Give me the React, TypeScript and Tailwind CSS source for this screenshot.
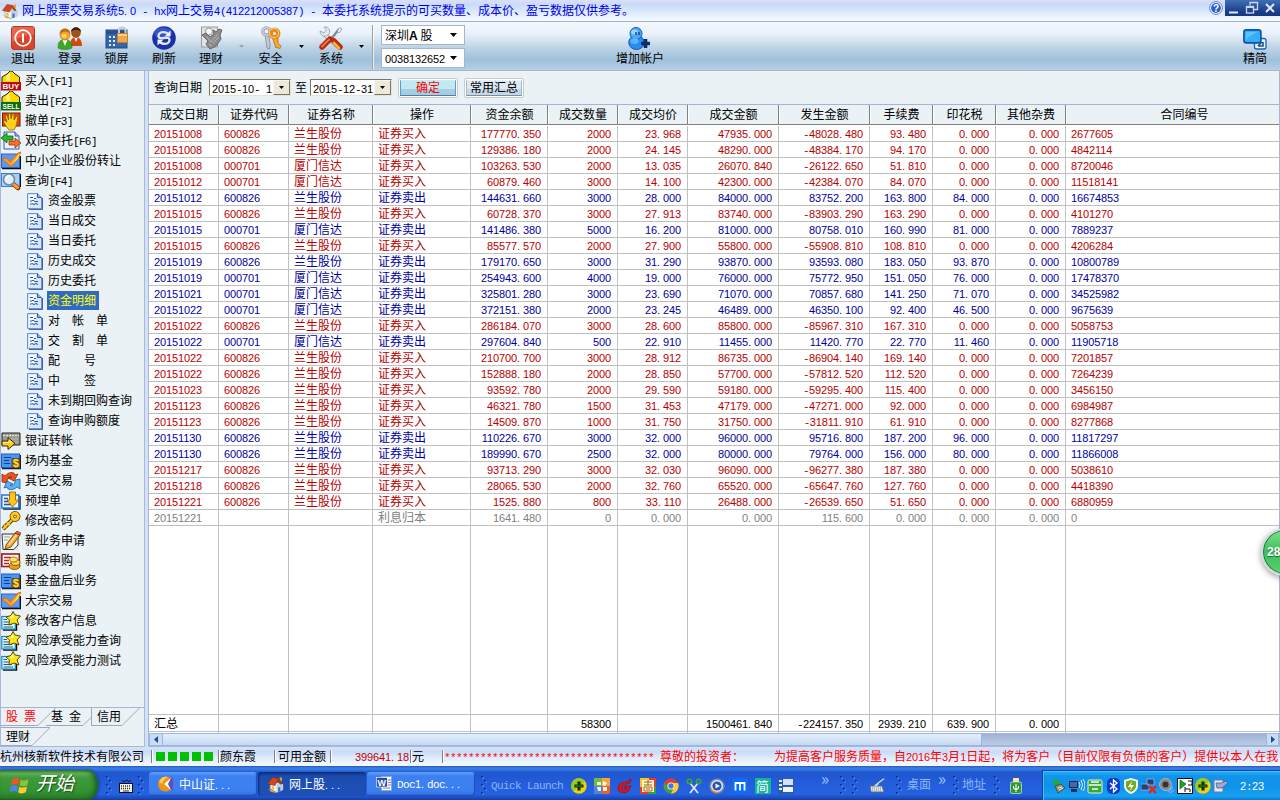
import React from "react";

type Kids = { children?: React.ReactNode };

/** Half-width characters on a 6px pitch: digits, points and the rest each have their own tracking. */
function Half({ t }: { t: string }) {
  return (
    <>
      {t.split(/(\d+|\.+)/).map((p, i) => {
        if (!p) return null;
        if (/^\d/.test(p))
          return <span key={i} className="font-['Liberation_Sans',sans-serif] text-[11px] tracking-[-0.12px]">{p}</span>;
        if (p[0] === ".")
          return <span key={i} className="font-['Liberation_Sans',sans-serif] text-[11px] tracking-[2.94px]">{p}</span>;
        return <span key={i} className="font-['Liberation_Mono',monospace] text-[11px] tracking-[-0.6px]">{p}</span>;
      })}
    </>
  );
}

/** Mixed text: ideographs at 12px, half-width characters on a 6px pitch. */
function T({ t }: { t: string }) {
  return <>{t.split(/([\x20-\x7e]+)/).map((p, i) => (i % 2 ? <Half key={i} t={p} /> : p))}</>;
}

function Svg({ w, h, vb, children, cls = "" }: Kids & { w: number; h: number; vb?: string; cls?: string }) {
  return (
    <svg width={w} height={h} viewBox={vb ?? `0 0 ${w} ${h}`} className={`block shrink-0 ${cls}`}>
      {children}
    </svg>
  );
}

/* ---------- shared small drawings ---------- */

const House = ({ s = 16 }: { s?: number }) => (
  <Svg w={s} h={s} vb="0 0 16 16">
    <path d="M3 8 L9 6 L15 8 V13 L9 15.5 L3 12Z" fill="#f4f4f4" stroke="#a98" strokeWidth=".6" />
    <path d="M9 7 L15 8 V13 L9 15.5Z" fill="#b9d0ee" />
    <path d="M0.5 7.5 L5 1.5 L11 2.5 L7.5 9Z" fill="#d2461e" stroke="#8a2a10" strokeWidth=".5" />
    <path d="M11 2.5 L14.5 7.5 L12.5 8 L10 5Z" fill="#a83416" />
    <path d="M12 1.5h2v4l-2-2z" fill="#f0a020" />
    <path d="M1 12 L5 13.5 L9 16 L4 15Z" fill="#f5a11c" />
    <path d="M10.5 10.5h2v4l-2 .8z" fill="#3a6db5" />
    <path d="M4.5 9.5l2 .6v3l-2-.8z" fill="#f4b63a" />
  </Svg>
);

const Arrow = ({ c = "#000" }: { c?: string }) => (
  <Svg w={5} h={3}>
    <path d="M0 0H5L2.5 3Z" fill={c} />
  </Svg>
);

/* ---------- title bar ---------- */

function TitleBar() {
  return (
    <div className="flex h-[22px] shrink-0 items-start border-b border-[#a9b5cf] bg-[linear-gradient(#dadefa_0,#c9dbf8_5px,#d6e6fb_10px,#f3f9ff_20px)] pl-[2px]">
      <div className="pt-[3px]">
        <House />
      </div>
      <div className="flex-1 whitespace-pre pl-[4px] text-[12px] leading-[20px] text-[#0000e8]">
        <T t="网上股票交易系统5.0 - hx网上交易4(412212005387) - 本委托系统提示的可买数量、成本价、盈亏数据仅供参考。" />
      </div>
      <Svg w={14} h={14} cls="mt-[1px] mr-[2px]">
        <circle cx="7" cy="7" r="6.4" fill="#f4f8ff" stroke="#5a86c8" />
        <circle cx="7" cy="7" r="4.9" fill="#2a5fd0" />
        <text x="7" y="10.6" textAnchor="middle" className="fill-white font-['Liberation_Sans',sans-serif] text-[10px] font-bold">?</text>
      </Svg>
      <div className="flex h-[16px] w-[55px] bg-[linear-gradient(#3d70b4,#1c3f8c_70%,#153782)]">
        <Svg w={55} h={16}>
          <path d="M4 12.5H13" stroke="#dce8fa" strokeWidth="2" />
          <path d="M25 5.5V2.5H32.5V9.5H29" stroke="#c9d8f0" strokeWidth="1.3" fill="none" />
          <rect x="21.5" y="6.5" width="7" height="6.5" stroke="#c9d8f0" strokeWidth="1.3" fill="none" />
          <path d="M21 7H29" stroke="#c9d8f0" strokeWidth="2" />
          <path d="M41 4L49 12M49 4L41 12" stroke="#dfe6f2" strokeWidth="2" />
        </Svg>
      </div>
    </div>
  );
}

/* ---------- toolbar ---------- */

const ExitIcon = () => (
  <Svg w={24} h={24}>
    <rect x=".5" y=".5" width="23" height="23" rx="2.5" fill="#d8442c" stroke="#b23a24" />
    <path d="M1 1H23V9C14 8 6 12 1 17Z" fill="#ec7a5c" opacity=".65" />
    <circle cx="12" cy="12" r="7.8" stroke="#fff" strokeWidth="1.7" fill="none" />
    <path d="M12 7.5V16.5" stroke="#fff" strokeWidth="2" />
  </Svg>
);
const UsersIcon = () => (
  <Svg w={26} h={24}>
    <path d="M13 20C13 13 16 11 19 11S25 14 25 20Z" fill="#d04a10" />
    <path d="M17 11L19 16L21 11Z" fill="#fff" />
    <ellipse cx="19" cy="6.5" rx="4.8" ry="5.4" fill="#a0521c" />
    <path d="M14 6C14 0 24 0 24 6C21 3 17 3 14 6Z" fill="#3a1c10" />
    <path d="M1 22C1 15 4 13.5 8 13.5S15 16 15 22C11 24 5 24 1 22Z" fill="#3ea62c" stroke="#2a8420" strokeWidth=".6" />
    <path d="M5.5 14L8 20L10.5 14Z" fill="#f2fff0" />
    <ellipse cx="8" cy="8.5" rx="5" ry="5.6" fill="#f4a628" stroke="#b86c10" strokeWidth=".6" />
    <path d="M2.8 8C2 1 14 1 13.2 8C11 4.5 6 4.5 2.8 8Z" fill="#c46a12" />
    <ellipse cx="7" cy="10" rx="2.5" ry="2" fill="#fcd071" />
  </Svg>
);
const LockIcon = () => (
  <Svg w={24} h={24}>
    <rect x="1" y="4" width="21" height="18" fill="#3566a8" stroke="#224a88" />
    <rect x="2" y="5" width="19" height="3" fill="#244f92" />
    <g fill="#dfeaf8">
      <path d="M4 10h2v2H4zM8 10h2v2H8zM4 14h2v2H4zM8 14h2v2H8zM4 18h2v2H4zM8 18h2v2H8z" />
    </g>
    <path d="M14 8V4.500C14 .5 20.500 .5 20.500 4.500V8" stroke="#c7cdd6" strokeWidth="2" fill="none" />
    <rect x="12.500" y="7.500" width="10" height="9" fill="#f0a848" stroke="#c6802c" />
    <path d="M13 9H22" stroke="#fbd08c" strokeWidth="2" />
  </Svg>
);
const RefreshIcon = () => (
  <Svg w={24} h={24}>
    <circle cx="12" cy="12" r="11.8" fill="#1a2fa8" />
    <ellipse cx="11" cy="7" rx="9" ry="5.500" fill="#4a6de0" opacity=".6" />
    <path d="M17 9C14 5 7 5 6.500 10C6.500 13 9 12 12 12" stroke="#dbe8ff" strokeWidth="2.400" fill="none" />
    <path d="M18.500 4.500V10.500H12.500Z" fill="#eef4ff" />
    <path d="M7 15C10 19 17 19 17.500 14C17.500 11 15 12 12 12" stroke="#dbe8ff" strokeWidth="2.400" fill="none" />
    <path d="M5.500 19.500V13.500H11.500Z" fill="#eef4ff" />
  </Svg>
);
const WealthIcon = () => (
  <Svg w={24} h={24}>
    <rect x="2.500" y="1" width="16" height="20" fill="#e2e2e2" stroke="#999" />
    <circle cx="10" cy="5.500" r="3.500" fill="#f6f6f6" stroke="#999" />
    <path d="M3 9L7 7L11 11L15 8L14 4L17 6L20 3L23 4L21 9L22 13L17 20L11 23L7 18L9 15Z" fill="#8c8c8c" stroke="#666" />
    <path d="M8 11L12 16L19 8M10 18L13 20M14 17L20 11" stroke="#b4b4b4" fill="none" />
  </Svg>
);
const KeysIcon = () => (
  <Svg w={24} h={24}>
    <path d="M6 8L8 22L10.5 23L11 18L9.5 8Z" fill="#c7cbd4" stroke="#7d8490" strokeWidth=".8" />
    <circle cx="7.500" cy="5.500" r="3.600" fill="none" stroke="#a3aab8" strokeWidth="3.400" />
    <circle cx="7.500" cy="5.500" r="3.800" fill="none" stroke="#dfe3ea" strokeWidth="1" />
    <path d="M13 11L17 22L19 21.500L20.500 23L22 20L19 17L19 11Z" fill="#f4a730" stroke="#b8701a" strokeWidth=".8" />
    <circle cx="15.500" cy="7.500" r="3.800" fill="none" stroke="#e88c1c" strokeWidth="4.400" />
    <circle cx="15" cy="7" r="4.600" fill="none" stroke="#fcd27a" strokeWidth="1" />
  </Svg>
);
const ToolsIcon = () => (
  <Svg w={24} h={24}>
    <path d="M5 8L19 21" stroke="#8c97a6" strokeWidth="4" />
    <path d="M5 8L19 21" stroke="#e9eef4" strokeWidth="2.4" />
    <path d="M1 5C1 10 7 12 10 8C12 4 9 0 5 1L7.5 4L5 7Z" fill="#e6ebf2" stroke="#8c97a6" strokeWidth=".8" />
    <path d="M20 3L13 12" stroke="#7f8a9a" strokeWidth="2.4" />
    <path d="M18 5L21 1.5L23 3L20 7Z" fill="#eef2f8" stroke="#7f8a9a" strokeWidth=".7" />
    <path d="M3 21L11 13" stroke="#b8240e" strokeWidth="5.400" strokeLinecap="round" />
    <path d="M3 20.500L10 13.500" stroke="#f2743c" strokeWidth="2" strokeLinecap="round" />
    <path d="M14.500 14.500L21 21" stroke="#c02a10" strokeWidth="5.400" strokeLinecap="round" />
    <path d="M15 17L20 22" stroke="#f8b62c" strokeWidth="2.600" strokeLinecap="round" />
  </Svg>
);
const AddUserIcon = () => (
  <Svg w={24} h={23}>
    <ellipse cx="8.5" cy="15.5" rx="7.8" ry="7" fill="#2a8df2" stroke="#1259b8" />
    <circle cx="8" cy="6.5" r="6" fill="#4aa8fb" stroke="#1259b8" />
    <ellipse cx="6.5" cy="5" rx="3.4" ry="2.6" fill="#9ed3ff" />
    <path d="M8 5v3M11 5v3" stroke="#123f8a" strokeWidth="1.4" />
    <ellipse cx="6.5" cy="14" rx="4" ry="3" fill="#58b6ff" />
    <path d="M17.5 12V21M13 16.5H22" stroke="#0e2f66" strokeWidth="3.6" />
  </Svg>
);
const CompactIcon = () => (
  <Svg w={24} h={21}>
    <rect x="11.500" y="9.500" width="11.500" height="10.500" rx="2" fill="#eaf3fc" stroke="#1d62b4" strokeWidth="1.300" />
    <path d="M20 13V17H15M15 17L19 13" stroke="#1d4f92" strokeWidth="1.600" fill="none" />
    <rect x=".9" y=".9" width="17" height="13" rx="2.500" fill="#35aef8" stroke="#0b53a4" strokeWidth="1.600" />
    <path d="M3 3H15C10 5 6 7 3 11Z" fill="#6ccbff" opacity=".7" />
  </Svg>
);

function Tool({ icon, label, w }: { icon: React.ReactNode; label: string; w: string }) {
  return (
    <div className={`${w} flex h-full shrink-0 flex-col items-center`}>
      <div className="flex h-[25px] items-end">{icon}</div>
      <div className="whitespace-nowrap text-[12px] leading-[15px]">{label}</div>
    </div>
  );
}
const Drop = ({ w, c }: { w: string; c?: string }) => (
  <div className={`${w} flex shrink-0 justify-center pt-[20px]`}>
    <Arrow c={c} />
  </div>
);
const Combo = ({ children }: Kids) => (
  <div className="flex h-[20px] w-[84px] items-center justify-between border border-[#a3b7cc] bg-white pl-[3px] pr-[7px] text-[12px] leading-[18px]">
    <span className="whitespace-pre">{children}</span>
    <Svg w={7} h={4}><path d="M0 0H7L3.5 4Z" /></Svg>
  </div>
);

function Toolbar() {
  return (
    <div className="flex h-[49px] shrink-0 border-b border-[#a9b5cf] bg-[linear-gradient(#f4f9ff_0,#e9f1fa_12px,#d3e2ef_19px,#bcd3e5_26px,#9fbfda_38px,#b6d0e7_48px)] pt-[3px]">
      <Tool w="w-[46px]" icon={<ExitIcon />} label="退出" />
      <Tool w="w-[48px]" icon={<UsersIcon />} label="登录" />
      <Tool w="w-[45px]" icon={<LockIcon />} label="锁屏" />
      <Tool w="w-[50px]" icon={<RefreshIcon />} label="刷新" />
      <Tool w="w-[44px]" icon={<WealthIcon />} label="理财" />
      <Drop w="w-[17px]" c="#a5a59a" />
      <Tool w="w-[41px]" icon={<KeysIcon />} label="安全" />
      <Drop w="w-[20px]" />
      <Tool w="w-[40px]" icon={<ToolsIcon />} label="系统" />
      <Drop w="w-[21px]" />
      <div className="h-[44px] w-[2px] shrink-0 border-l border-[#a9a18c] bg-white/70" />
      <div className="ml-[7px] flex flex-col gap-[3px]">
        <Combo>深圳<b className="font-['Liberation_Sans',sans-serif] text-[12px]">A</b> 股</Combo>
        <Combo><T t="0038132652" /></Combo>
      </div>
      <div className="w-[145px] shrink-0" />
      <Tool w="w-[60px]" icon={<AddUserIcon />} label="增加帐户" />
      <div className="flex-1" />
      <Tool w="w-[50px]" icon={<CompactIcon />} label="精简" />
    </div>
  );
}

/* ---------- sidebar ---------- */

const Bag = ({ fill, t, len }: { fill: string; t: string; len: number }) => (
  <Svg w={20} h={20}>
    <path d="M1 11.500V6L6 3L9 0H11L14 3L18.500 6V11.500Z" fill="#ffd800" stroke="#111" strokeWidth=".9" />
    <path d="M5 5L9 2V10H5Z" fill="#fff27a" />
    <rect y="11" width="20" height="8.500" fill={fill} />
    <text x="10" y="18" textAnchor="middle" textLength={len} lengthAdjust="spacingAndGlyphs" className="fill-white font-['Liberation_Sans',sans-serif] text-[7.500px] font-bold leading-none">{t}</text>
  </Svg>
);
const Buy = () => <Bag fill="#c00808" t="BUY" len={17} />;
const Sell = () => <Bag fill="#0a6e0a" t="SELL" len={17} />;
const Hand = () => (
  <Svg w={20} h={20}>
    <rect x="1.500" y="2" width="17.500" height="13" fill="#e8480c" stroke="#7a1c00" />
    <path d="M4 5L6 4L7.500 9V2.500H9.500L10 8L11.500 2.500L13 3V9L15.500 5L17 6L15 15L13 19H8L5 15L2 10L4 9.500L6 11Z" fill="#ffd21c" stroke="#7a5a00" strokeWidth=".7" />
  </Svg>
);
const Swap = () => (
  <Svg w={20} h={20}>
    <path d="M3 1H14L18 5V18H3Z" fill="#eef3ff" stroke="#3558b0" />
    <path d="M14 1V5H18" fill="#9fb8ee" stroke="#3558b0" />
    <path d="M0 7L6 2V5H12V9H6V12Z" fill="#2cb82c" stroke="#0c6a10" strokeWidth=".8" />
    <path d="M20 12L14 7V10H8V14H14V17Z" fill="#f2742c" stroke="#9a3208" strokeWidth=".8" />
  </Svg>
);
const Check = () => (
  <Svg w={20} h={20}>
    <path d="M1 17.500H19.500V5" stroke="#111" strokeWidth="1.500" fill="none" />
    <rect x=".5" y="3" width="18" height="13.500" fill="#5b9af0" stroke="#2d62c4" />
    <path d="M1 8L6 7L9 11L17 2L20 1L17 8L10 16L6 12Z" fill="#ff9a1c" stroke="#d0641c" strokeWidth=".8" />
    <path d="M10 14L18 3L19 3L17 8Z" fill="#ffe040" />
  </Svg>
);
const Search = () => (
  <Svg w={20} h={20}>
    <path d="M19.500 3V16" stroke="#111" />
    <rect x=".5" y="2.500" width="18" height="13" fill="#a9cff8" stroke="#3b7ed8" />
    <path d="M11 12L17 17" stroke="#8a3400" strokeWidth="4.600" strokeLinecap="round" />
    <path d="M11 12L16.500 16.500" stroke="#ff9a34" strokeWidth="3" strokeLinecap="round" />
    <circle cx="8" cy="8.500" r="5.500" fill="#dff0fc" stroke="#6f8ba5" strokeWidth="1.600" />
    <path d="M5 8.500C5 6 7 5 9 5" stroke="#fff" strokeWidth="1.500" fill="none" />
  </Svg>
);
const Doc = () => (
  <Svg w={16} h={17}>
    <path d="M15 5V16H2" stroke="#123a94" strokeWidth="1.600" fill="none" />
    <path d="M.5 .5H10.500L14.500 4.500V15.500H.5Z" fill="#d6e6ff" stroke="#6b93dc" />
    <path d="M2 2H9V8L2 14Z" fill="#f4f9ff" />
    <path d="M10.500 .5V4.500H14.500" fill="#8db2ec" stroke="#2c55ae" />
    <path d="M3 4.500H6M7 5.500H9M3 8H5L6 7L8 8.500H11M3 11.500L5 10.500L7 11.500L9 10.500L11 11.500" stroke="#2b5487" fill="none" />
  </Svg>
);
const Bank = () => (
  <Svg w={20} h={20}>
    <path d="M1 2H19V14H1Z" fill="#9a9a92" stroke="#222" />
    <path d="M2 4.500H18" stroke="#dedede" strokeWidth="1.500" strokeDasharray="2 1" />
    <path d="M8 8H17M13 11H17" stroke="#bbb" />
    <path d="M1 10H7V6.500L14 12.500L7 18.500V15H1Z" fill="#ffc81c" stroke="#3a2a00" />
    <path d="M2 11.500H8V9.500L11 12" stroke="#fff08c" fill="none" />
  </Svg>
);
const Fund = () => (
  <Svg w={20} h={20}>
    <path d="M1 17.500H19.500V4" stroke="#123" fill="none" strokeWidth="1.400" />
    <rect x=".5" y="3" width="18" height="13.500" fill="#4a96f4" stroke="#1d5cc0" />
    <path d="M3 6.500H10M3 9.500H8M3 12.500H9" stroke="#0c3c90" strokeWidth="1.200" />
    <rect x="10.500" y="7" width="8.500" height="10" fill="#7a4a08" />
    <text x="14.700" y="15.800" textAnchor="middle" className="fill-[#ffe45a] font-['Liberation_Sans',sans-serif] text-[11px] font-bold leading-none">$</text>
  </Svg>
);
const Cycle = () => (
  <Svg w={20} h={20}>
    <path d="M1 3L4 5C8 0 14 1 14 4L17 3L13 10L7 7L11 6C9 5 6 7 6 12L1 11Z" fill="#f0501c" stroke="#7a1c08" strokeWidth=".7" />
    <path d="M19 18L16 16C12 20 6 19 6 16L3 17L6 10L12 13L9 14.500C12 16 14 13 14 9L19 8Z" fill="#5ab4f4" stroke="#0c4a94" strokeWidth=".7" />
  </Svg>
);
const Down = () => (
  <Svg w={20} h={20}>
    <path d="M2 18H19V5" stroke="#0c1c40" strokeWidth="1.400" fill="none" />
    <rect x=".8" y="4" width="17" height="13" fill="#eaf5ff" stroke="#1c6fd0" strokeWidth="1.400" />
    <path d="M3 7.500H7M3 10.500H7M3 13.500H10" stroke="#2453a0" strokeWidth="1.300" />
    <path d="M8.500 1H14.500V9H18L11.500 16L6 9H8.500Z" fill="#ffc41c" stroke="#8a5a00" strokeWidth=".8" />
  </Svg>
);
const Key = () => (
  <Svg w={20} h={20}>
    <path d="M11 9L2 18M3 13.500L6 17M6 11L9 14" stroke="#5a3c00" strokeWidth="4" />
    <circle cx="14" cy="5.500" r="3.200" fill="none" stroke="#5a3c00" strokeWidth="4.400" />
    <circle cx="14" cy="5.500" r="3.200" fill="none" stroke="#ffc81c" strokeWidth="3" />
    <path d="M11 9L2 18M3 14L5.500 16.500M6 11.500L8.500 14" stroke="#ffc81c" strokeWidth="2.200" />
  </Svg>
);
const Pencil = () => (
  <Svg w={20} h={20}>
    <path d="M1 3H17V14L13 18.500H2Z" fill="#f2f2ee" stroke="#333" />
    <path d="M3 6H9M3 9H7" stroke="#999" />
    <path d="M5 14L14 2L19 4L10 16L4 18Z" fill="#f6a830" stroke="#5a3000" strokeWidth=".8" />
    <path d="M14 2L16 0L20 2L19 4Z" fill="#e86060" stroke="#5a3000" strokeWidth=".6" />
    <path d="M7.500 14L15.500 4" stroke="#ffe08a" strokeWidth="1.500" />
  </Svg>
);
const IPO = () => (
  <Svg w={20} h={20}>
    <rect x=".8" y="3" width="17.500" height="12.500" fill="#fff" stroke="#a01818" strokeWidth="1.600" />
    <path d="M3 6.500H10M3 9.500H8M3 12.500H8" stroke="#c02020" strokeWidth="1.500" />
    <ellipse cx="13.500" cy="15" rx="5.500" ry="3.500" fill="#e8a010" stroke="#6a4400" strokeWidth=".8" />
    <ellipse cx="14.500" cy="11.500" rx="4.500" ry="3" fill="#ffd040" stroke="#6a4400" strokeWidth=".8" />
    <ellipse cx="12.500" cy="8.500" rx="4" ry="2.600" fill="#ffe06a" stroke="#8a5c00" strokeWidth=".8" />
  </Svg>
);
const Star = () => (
  <Svg w={20} h={20}>
    <path d="M2 19H15.500V8" stroke="#111" strokeWidth="1.500" fill="none" />
    <rect x=".8" y="5.500" width="13.500" height="12.500" fill="#d8f4ff" stroke="#1c8cc0" strokeWidth="1.200" />
    <path d="M2.500 8.500H6M2.500 11H8M2.500 13.500H11M2.500 16H12" stroke="#1c5c8c" />
    <path d="M12 .5L14 4L19.500 5L16 9L18 14L13 12L8 14L8.500 9L5 6L10 4.500Z" fill="#ffe414" stroke="#4a3c00" strokeWidth=".9" />
    <path d="M12 3L12.500 7L9 6" fill="#fffac0" />
  </Svg>
);

const TOP: [() => React.JSX.Element, string][] = [
  [Buy, "买入[F1]"],
  [Sell, "卖出[F2]"],
  [Hand, "撤单[F3]"],
  [Swap, "双向委托[F6]"],
  [Check, "中小企业股份转让"],
  [Search, "查询[F4]"],
];
const SUB = [
  "资金股票", "当日成交", "当日委托", "历史成交", "历史委托", "资金明细",
  "对　帐　单", "交　割　单", "配　　号", "中　　签", "未到期回购查询", "查询申购额度",
];
const REST: [() => React.JSX.Element, string][] = [
  [Bank, "银证转帐"],
  [Fund, "场内基金"],
  [Cycle, "其它交易"],
  [Down, "预埋单"],
  [Key, "修改密码"],
  [Pencil, "新业务申请"],
  [IPO, "新股申购"],
  [Fund, "基金盘后业务"],
  [Check, "大宗交易"],
  [Star, "修改客户信息"],
  [Star, "风险承受能力查询"],
  [Star, "风险承受能力测试"],
];

function Row({ I, t }: { I: () => React.JSX.Element; t: string }) {
  return (
    <li className="flex h-[20px] items-start gap-[4px]">
      <I />
      <span className="whitespace-pre leading-[18px]"><T t={t} /></span>
    </li>
  );
}

const Slant = ({ cls = "" }: { cls?: string }) => (
  <Svg w={18} h={18} cls={cls}>
    <path d="M0 17.5L17.5 0" stroke="#9fa9ba" fill="none" />
  </Svg>
);

function Sidebar() {
  return (
    <div className="flex w-[145px] shrink-0 flex-col border-x border-b border-[#a9b8d4] bg-[#eaf2f6]">
      <ul className="flex-1 text-[12px]">
        {TOP.map(([I, t]) => <Row key={t} I={I} t={t} />)}
        {SUB.map((t) => (
          <li key={t} className="flex h-[20px] items-start gap-[4px] pl-[26px]">
            <span className="pt-[2px]"><Doc /></span>
            <span className={`h-[19px] whitespace-pre pl-[1px] pr-[3px] leading-[18px] ${t === "资金明细" ? "bg-[#316ac5] text-[#ffff00]" : ""}`}>{t}</span>
          </li>
        ))}
        {REST.map(([I, t]) => <Row key={t} I={I} t={t} />)}
      </ul>
      <div className="flex h-[19px] border-t border-[#a9b5cf] text-[12px] leading-[16px]">
        <div className="w-[37px] whitespace-pre border-b border-[#9fa9ba] pl-[5px] text-[#f00]"><T t="股 票" /></div>
        <Slant />
        <div className="-ml-[10px] w-[37px] whitespace-pre border-b border-[#9fa9ba] pl-[5px]"><T t="基 金" /></div>
        <div className="w-[8px] overflow-hidden"><Slant /></div>
        <div className="w-[31px] border-b border-l border-[#9fa9ba] pl-[5px]">信用</div>
        <Slant />
      </div>
      <div className="mt-[1px] flex h-[19px] text-[12px] leading-[16px]">
        <div className="w-[31px] border-y border-[#9fa9ba] pl-[5px]">理财</div>
        <div className="h-[19px] w-[18px] border-t border-[#9fa9ba]"><Slant /></div>
      </div>
    </div>
  );
}

/* ---------- table ---------- */

const COLS = "grid grid-cols-[70px_70px_84px_98px_77px_70px_70px_91px_91px_63px_63px_70px_1fr]";
const HEAD = ["成交日期", "证券代码", "证券名称", "操作", "资金余额", "成交数量", "成交均价", "成交金额", "发生金额", "手续费", "印花税", "其他杂费", "合同编号"];

// date, stock (L/X), side (B/S), balance, quantity, price, amount, net, fee, stamp tax, contract
const DATA = `20151008 L B 177770.350 2000 23.968 47935.000 -48028.480 93.480 0.000 2677605
20151008 L B 129386.180 2000 24.145 48290.000 -48384.170 94.170 0.000 4842114
20151008 X B 103263.530 2000 13.035 26070.840 -26122.650 51.810 0.000 8720046
20151012 X B 60879.460 3000 14.100 42300.000 -42384.070 84.070 0.000 11518141
20151012 L S 144631.660 3000 28.000 84000.000 83752.200 163.800 84.000 16674853
20151015 L B 60728.370 3000 27.913 83740.000 -83903.290 163.290 0.000 4101270
20151015 X S 141486.380 5000 16.200 81000.000 80758.010 160.990 81.000 7889237
20151015 L B 85577.570 2000 27.900 55800.000 -55908.810 108.810 0.000 4206284
20151019 L S 179170.650 3000 31.290 93870.000 93593.080 183.050 93.870 10800789
20151019 X S 254943.600 4000 19.000 76000.000 75772.950 151.050 76.000 17478370
20151021 X S 325801.280 3000 23.690 71070.000 70857.680 141.250 71.070 34525982
20151022 X S 372151.380 2000 23.245 46489.000 46350.100 92.400 46.500 9675639
20151022 L B 286184.070 3000 28.600 85800.000 -85967.310 167.310 0.000 5058753
20151022 X S 297604.840 500 22.910 11455.000 11420.770 22.770 11.460 11905718
20151022 L B 210700.700 3000 28.912 86735.000 -86904.140 169.140 0.000 7201857
20151022 L B 152888.180 2000 28.850 57700.000 -57812.520 112.520 0.000 7264239
20151023 L B 93592.780 2000 29.590 59180.000 -59295.400 115.400 0.000 3456150
20151123 L B 46321.780 1500 31.453 47179.000 -47271.000 92.000 0.000 6984987
20151123 L B 14509.870 1000 31.750 31750.000 -31811.910 61.910 0.000 8277868
20151130 L S 110226.670 3000 32.000 96000.000 95716.800 187.200 96.000 11817297
20151130 L S 189990.670 2500 32.000 80000.000 79764.000 156.000 80.000 11866008
20151217 L B 93713.290 3000 32.030 96090.000 -96277.380 187.380 0.000 5038610
20151218 L B 28065.530 2000 32.760 65520.000 -65647.760 127.760 0.000 4418390
20151221 L B 1525.880 800 33.110 26488.000 -26539.650 51.650 0.000 6880959
20151221 - - 1641.480 0 0.000 0.000 115.600 0.000 0.000 0`
  .split("\n")
  .map((l) => {
    const [d, s, k, bal, q, p, a, n, f, tax, c] = l.split(" ");
    const code = s === "L" ? "600826" : s === "X" ? "000701" : "";
    const name = s === "L" ? "兰生股份" : s === "X" ? "厦门信达" : "";
    const op = k === "B" ? "证券买入" : k === "S" ? "证券卖出" : "利息归本";
    return { k, cells: [d, code, name, op, bal, q, p, a, n, f, tax, "0.000", c] };
  });

function Cells({ cells }: { cells: string[] }) {
  return (
    <>
      {cells.map((c, i) => (
        <div
          key={i}
          className={`whitespace-pre border-[#c0c0c0] ${i < 12 ? "border-r" : ""} ${i > 3 && i < 12 ? "pr-[6px] text-right" : "pl-[5px]"}`}
        >
          <T t={c} />
        </div>
      ))}
    </>
  );
}

function DateBox({ t }: { t: string }) {
  return (
    <div className="flex h-[17px] w-[82px] justify-between border border-b-[#e8e4d4] border-l-[#77746a] border-r-[#e8e4d4] border-t-[#77746a] bg-white text-[12px] leading-[16px]">
      <span className="whitespace-pre pl-[2px]"><T t={t} /></span>
      <span className="flex w-[17px] items-center justify-center border border-b-[#77746a] border-l-[#f8f6ee] border-r-[#77746a] border-t-[#f8f6ee] bg-[#ece9d8]">
        <Arrow />
      </span>
    </div>
  );
}

function Main() {
  return (
    <div className="flex min-w-0 flex-1 flex-col border-x border-b border-[#a9b8d0] bg-white">
      <div className="flex h-[34px] shrink-0 items-center border-b border-[#a9b5cf] bg-[#eaf2f6] pl-[5px] text-[12px]">
        <span className="h-[18px] w-[55px] leading-[16px]">查询日期</span>
        <DateBox t="2015-10- 1" />
        <span className="h-[18px] w-[19px] pl-[4px] leading-[16px]">至</span>
        <DateBox t="2015-12-31" />
        <div className="ml-[6px] h-[20px] w-[60px] rounded-[2px] border border-[#c5ccd2] bg-white p-[1px]">
          <div className="h-full border border-b-[#4a7ea8] border-l-[#5d9cc8] border-r-[#5d9cc8] border-t-[#c8ecf4] bg-[linear-gradient(#c2e8f0_60%,#a6cce0_60%)] text-center leading-[12px] text-[#f00]">确定</div>
        </div>
        <div className="ml-[6px] h-[20px] w-[60px] rounded-[2px] border border-[#c5ccd2] bg-white p-[1px]">
          <div className="h-full border border-b-[#7d8ea0] border-l-[#a5b8c8] border-r-[#a5b8c8] border-t-[#e8f0f8] bg-[linear-gradient(#dde9f4_60%,#c5d6e6_60%)] text-center leading-[12px]">常用汇总</div>
        </div>
      </div>
      <div className={`${COLS} h-[20px] shrink-0 border-b border-[#808080] bg-[#eaf2f6] text-center text-[12px] leading-[18px]`}>
        {HEAD.map((h, i) => (
          <div key={h} className={`border-l border-l-white ${i < 12 ? "border-r border-r-[#808080]" : "pl-[23px]"}`}>{h}</div>
        ))}
      </div>
      <div className="h-[1px] shrink-0" />
      {DATA.map((r, i) => (
        <div
          key={i}
          className={`${COLS} h-[16px] shrink-0 border-b border-[#c0c0c0] text-[12px] leading-[14px] ${r.k === "B" ? "text-[#b80000]" : r.k === "S" ? "text-[#0000a0]" : "text-[#808080]"}`}
        >
          <Cells cells={r.cells} />
        </div>
      ))}
      <div className={`${COLS} flex-1`}><Cells cells={Array(13).fill("")} /></div>
      <div className={`${COLS} h-[18px] shrink-0 border-y border-[#c0c0c0] text-[12px] leading-[16px]`}>
        <Cells cells={["汇总", "", "", "", "", "58300", "", "1500461.840", "-224157.350", "2939.210", "639.900", "0.000", ""]} />
      </div>
      <div className="mt-[1px] flex h-[13px] shrink-0 border border-[#9db8e0] bg-[linear-gradient(#9fb3d6,#bccbe4)]">
        <div className="flex w-[12px] items-center justify-center bg-[#c9dcf6]">
          <Svg w={4} h={7}><path d="M4 0V7L0 3.5Z" fill="#1c4a94" /></Svg>
        </div>
        <div className="w-[820px] border-x border-[#9db8e0] bg-[linear-gradient(#e4effc,#c5d8f2)]" />
        <div className="flex-1" />
        <div className="flex w-[12px] items-center justify-center border-l border-[#9db8e0] bg-[#c9dcf6]">
          <Svg w={4} h={7}><path d="M0 0V7L4 3.5Z" fill="#1c4a94" /></Svg>
        </div>
      </div>
    </div>
  );
}

/* ---------- status bar ---------- */

const Sep = () => <div className="my-[3px] w-[2px] shrink-0 border-l border-[#7f7f7f] bg-white" />;

function StatusBar() {
  return (
    <div className="flex h-[19px] shrink-0 overflow-hidden whitespace-pre bg-[linear-gradient(#d6e3fa_0,#c9dcf8_5px,#e0ecfc_11px,#f4f9ff_19px)] text-[12px] leading-[18px]">
      <div className="w-[151px] shrink-0">杭州核新软件技术有限公司</div>
      <Sep />
      <div className="flex w-[65px] shrink-0 items-center gap-[3px] pl-[3px]">
        {[0, 1, 2, 3, 4].map((i) => <div key={i} className="h-[9px] w-[9px] bg-[#00c000]" />)}
      </div>
      <Sep />
      <div className="w-[54px] shrink-0">颜东霞</div>
      <Sep />
      <div className="w-[54px] shrink-0 pl-[2px]">可用金额</div>
      <Sep />
      <div className="w-[78px] shrink-0 pr-[1px] text-right text-[#c00000]"><T t="399641.18" /></div>
      <Sep />
      <div className="w-[30px] shrink-0">元</div>
      <Sep />
      <div className="min-w-0 flex-1 overflow-hidden text-[#f00]">
        <T t="*********************************** 尊敬的投资者：     为提高客户服务质量，自2016年3月1日起，将为客户（目前仅限有负债的客户）提供以本人在我" />
      </div>
    </div>
  );
}

/* ---------- taskbar ---------- */

const Grip = ({ w }: { w: string }) => (
  <div className={`${w} flex h-full shrink-0 items-center justify-center`}>
    <Svg w={6} h={20}>
      {[0, 4, 8, 12, 16].map((y, i) => (
        <g key={y}>
          <rect x={i % 2 ? 3 : 0} y={y} width="2" height="2" fill="#0b3299" />
          <rect x={i % 2 ? 4 : 1} y={y + 1} width="2" height="2" fill="#5a9af4" opacity=".5" />
        </g>
      ))}
    </Svg>
  </div>
);

function Task({ icon, t, cls }: { icon: React.ReactNode; t: string; cls: string }) {
  return (
    <div className={`mt-[1px] mr-[1px] flex h-[24px] w-[108px] shrink-0 items-center gap-[5px] rounded-[3px] pl-[9px] text-[12px] text-white ${cls}`}>
      {icon}
      <span className="whitespace-pre"><T t={t} /></span>
    </div>
  );
}

const Cell = ({ w = "w-[23px]", children }: Kids & { w?: string }) => (
  <div className={`${w} flex shrink-0 items-center justify-center`}>{children}</div>
);

const PlusBall = () => (
  <Svg w={16} h={16}>
    <circle cx="8" cy="8" r="7.7" fill="#f2cf10" />
    <path d="M8 .3A7.700 7.700 0 0 0 2 13C5 13 5 9 8 8S13 4 14 3A7.700 7.700 0 0 0 8 .3Z" fill="#9cc824" />
    <path d="M8 3.500V12.500M3.500 8H12.500" stroke="#083a0c" strokeWidth="3.200" />
    <path d="M5 8H11" stroke="#2f8a2c" strokeWidth="1" />
  </Svg>
);

const QUICK: React.JSX.Element[] = [
  <PlusBall />,
  <Svg w={16} h={16}>
    <rect width="16" height="16" rx="2" fill="#e8622c" />
    <path d="M0 0H8V8H0Z" fill="#78b83c" /><path d="M8 0H16V8H8Z" fill="#f2a43c" /><path d="M0 8H8V16H0Z" fill="#5484cc" />
    <path d="M3 4H7V7H3ZM9 3L13 5L11 8L8.500 7ZM3 9H7V13H4ZM9 9H13V13H9Z" fill="#fff" opacity=".9" />
  </Svg>,
  <Svg w={16} h={16}>
    <path d="M14 1L9 4C4 4 1 7 1 10.500C1 15 7 16 11 13.500L14 8H8L7 10H10C8 13 5 12 5 10C5 7 9 6 13 5Z" fill="#e01414" stroke="#8a0808" strokeWidth=".6" />
  </Svg>,
  <Svg w={16} h={16}>
    <rect width="16" height="16" fill="#e83a28" /><rect width="9" height="9" fill="#f4c41c" /><rect x="8" y="9" width="8" height="7" fill="#38a03a" />
    <rect x="2" y="2" width="12" height="12" fill="#fff6d8" />
    <path d="M4 4H12M8 2V7M4 7H12M4 9V13H12V9ZM6 11H10" stroke="#a86008" fill="none" />
  </Svg>,
  <Svg w={16} h={16}>
    <circle cx="8" cy="8" r="7.500" fill="#e23c2c" />
    <path d="M1.500 4.500A7.500 7.500 0 0 0 8 15.500L11 9.500L5 9.500Z" fill="#3aa44a" />
    <path d="M15 5A7.500 7.500 0 0 1 8 15.500L11.300 9L10 5Z" fill="#f8cc2c" />
    <circle cx="8" cy="8" r="3.600" fill="#fff" /><circle cx="8" cy="8" r="2.700" fill="#3a7ce0" />
  </Svg>,
  <Svg w={16} h={16}>
    <path d="M4 5L12 15M12 5L4 15" stroke="#dfe6ee" strokeWidth="1.800" />
    <circle cx="3.500" cy="3.500" r="2.200" fill="none" stroke="#3ca834" strokeWidth="1.500" /><circle cx="12.500" cy="3.500" r="2.200" fill="none" stroke="#3ca834" strokeWidth="1.500" />
  </Svg>,
  <Svg w={16} h={16}>
    <circle cx="8" cy="8" r="6.800" fill="#e8eef8" stroke="#7f8cac" strokeWidth="1.600" />
    <path d="M2 11A6.500 6.500 0 0 0 9 14.500" stroke="#e8801c" strokeWidth="1.600" fill="none" />
    <circle cx="8" cy="8" r="4.600" fill="#2454b8" /><path d="M6.500 5.500L11 8L6.500 10.500Z" fill="#fff" />
  </Svg>,
  <Svg w={16} h={16}>
    <rect width="16" height="16" rx="1.500" fill="#0c6cff" />
    <path d="M3.500 12.500V5H12.500V12.500M8 5V12.500" stroke="#fff" strokeWidth="1.800" fill="none" />
  </Svg>,
  <div className="h-[16px] w-[16px] bg-[#14b49c] text-center text-[13px] leading-[15px] text-white">简</div>,
  <Svg w={16} h={16}>
    <rect width="16" height="16" fill="#2a5ca8" /><path d="M1 2H4V4H1ZM1 6H4V8H1ZM1 10H4V12H1Z" fill="#dce8f8" />
    <rect x="5" y="1" width="10" height="6" fill="#cfe2f8" /><rect x="5" y="9" width="10" height="5" fill="#eaf3fc" />
  </Svg>,
];

const TRAY: React.JSX.Element[] = [
  <Svg w={16} h={16}><path d="M2 1L9 3L8 8L3 7Z" fill="#1fae2c" /><path d="M4 8L10 6L14 10L7 15Z" fill="#8e9488" stroke="#44503c" /><path d="M7 10L11 9M8 12L12 10" stroke="#e4e8dc" /></Svg>,
  <Svg w={16} h={16}><path d="M0 3H9V10H0ZM2 11H8V14H2Z" fill="#1c2c58" /><path d="M1 4H8V9H1Z" fill="#4a66a8" /><path d="M10 4Q12 7 10 10M12 2Q15 7 12 12M14 1Q18 7 14 13" stroke="#dde8f4" fill="none" /></Svg>,
  <Svg w={16} h={16}><rect x="1" y="2" width="14" height="13" rx="1.500" fill="#3aa838" stroke="#e4f4dc" /><path d="M2 7H14M4 4H12M5 11H11" stroke="#f4fff0" strokeWidth="1.500" /></Svg>,
  <Svg w={13} h={16}><rect width="13" height="16" rx="5" fill="#0838d0" /><path d="M3 5L10 11L6.500 14V2L10 5L3 11" stroke="#fff" strokeWidth="1.300" fill="none" /></Svg>,
  <Svg w={16} h={16}><path d="M8 0L15 2V8C15 12 11 15 8 16C5 15 1 12 1 8V2Z" fill="#f2f4ea" /><path d="M8 2L13 3.500V8C13 11 10 13 8 14C6 13 3 11 3 8V3.500Z" fill="#6cae20" /><path d="M9 3L5 9H8L7 13L11 7H8Z" fill="#fff" /></Svg>,
  <Svg w={16} h={16}><path d="M6 1H13V7H6ZM0 6H8V12H0Z" fill="#26407c" stroke="#a8b8d8" strokeWidth=".7" /><path d="M8 8L15 15M15 8L8 15" stroke="#e82418" strokeWidth="2.200" /></Svg>,
  <Svg w={16} h={16}><circle cx="6.500" cy="6.500" r="6" fill="#88898c" stroke="#ccc" strokeWidth=".7" /><circle cx="6.500" cy="6.500" r="3" fill="#333" /><path d="M9 14L14 9M11 15L15 12" stroke="#7fb0f4" strokeWidth="1.300" /></Svg>,
  <Svg w={16} h={16}><rect x=".5" y=".5" width="15" height="15" fill="#fff" stroke="#111" /><path d="M3 2V11L9 6Z" fill="#18a81c" stroke="#052" strokeWidth=".7" /><path d="M8 9V14M8 11H13V14M11 3H15V7H11" stroke="#111" fill="none" /></Svg>,
  <PlusBall />,
  <Svg w={16} h={16}><path d="M1 2H10V14H1Z" fill="#e4e8f4" stroke="#6a7aa8" /><path d="M3 5H8L13 3L15 5L9 10H4Z" fill="#9cacd4" stroke="#3c4c7c" strokeWidth=".7" /></Svg>,
];

const Faint = ({ w, t }: { w: string; t: string }) => (
  <div className={`${w} shrink-0 whitespace-pre pt-[4px] text-[12px] leading-[17px] text-[#8db4f2]`}><T t={t} /></div>
);

function Taskbar() {
  return (
    <div className="flex h-[34px] shrink-0 bg-[linear-gradient(#2858b4_0,#3b7fe4_2px,#3076e2_4px,#2259d0_6px,#2058d2_9px,#245ddb_18px,#2562e0_28px,#1f51c8_31px,#173ea0_34px)] pt-[5px]">
      <div className="-mt-[1px] flex h-[30px] w-[98px] shrink-0 items-center rounded-r-[12px_18px] bg-[linear-gradient(#3c8a3c,#64b45c_3px,#3c9a3a_8px,#349434_20px,#2c7e2c_28px,#1e5c22)] pl-[10px] shadow-[inset_-3px_0_5px_#1d5d20,1px_0_3px_#123c8c]">
        <Svg w={20} h={19}>
          <path d="M2 3.500Q5.500 .8 9.500 3L8.300 9Q4.500 7 1 9.300Z" fill="#ee5426" />
          <path d="M10.700 3.600Q14 5.800 18.500 3L17.300 9.200Q13.500 11 9.600 9.400Z" fill="#88c440" />
          <path d="M.7 10.600Q4.500 8.300 8 10.300L6.900 16Q3.500 14 0 16.300Z" fill="#4a84f0" />
          <path d="M9.300 10.700Q13 12.500 17 10.500L15.800 16.300Q12 18.500 8.100 16.500Z" fill="#fccc30" />
        </Svg>
        <span className="-mt-[6px] pl-[6px] text-[19px] italic leading-[28px] text-white [text-shadow:1px_1px_1px_#1a4a1a]">开始</span>
      </div>
      <Grip w="w-[21px]" />
      <Cell w="w-[14px]">
        <Svg w={14} h={14}>
          <path d="M3 1L5 3L8 1L10 3L12 1" stroke="#0c1c4c" fill="none" />
          <rect x=".5" y="4.500" width="13" height="9" fill="#f2f2ea" stroke="#111" />
          <path d="M2 7H12M2 9.500H12" stroke="#333" strokeWidth="1.300" strokeDasharray="1 1" /><path d="M4 12H10" stroke="#333" />
        </Svg>
      </Cell>
      <Grip w="w-[16px]" />
      <Task
        cls="bg-[linear-gradient(#62a0fa,#3d80f2_4px,#3c7ff0_19px,#2f68d8)] shadow-[inset_-1px_-1px_1px_#1f4cb4]"
        t="中山证..."
        icon={
          <Svg w={16} h={16}>
            <circle cx="7.500" cy="8" r="7.500" fill="#f29410" /><path d="M1 6Q4 0 10 1Q5 3 4 8Z" fill="#ffcf58" />
            <path d="M15 1L7 8L15 15Z" fill="#6a4cae" /><path d="M13 2L6 8L13 14L10 8Z" fill="#fff" />
          </Svg>
        }
      />
      <Task cls="bg-[linear-gradient(#143c92,#1c4cb0_5px,#1e50b8)] shadow-[inset_1px_1px_2px_#0c2a70]" t="网上股..." icon={<House s={17} />} />
      <Task
        cls="bg-[linear-gradient(#62a0fa,#3d80f2_4px,#3c7ff0_19px,#2f68d8)] shadow-[inset_-1px_-1px_1px_#1f4cb4]"
        t="Doc1.doc..."
        icon={
          <Svg w={16} h={16}>
            <rect x="5.500" y=".5" width="10" height="14" fill="#fff" stroke="#8fa4c8" /><path d="M12 4H15M12 6.500H15M12 9H15M7 12H14" stroke="#5c7cb8" />
            <rect x=".3" y="1.500" width="11" height="9.500" fill="#284e9c" stroke="#fff" strokeWidth=".6" />
            <text x="5.800" y="9.500" textAnchor="middle" className="fill-white font-['Liberation_Sans',sans-serif] text-[9px] font-bold leading-none">W</text>
          </Svg>
        }
      />
      <Grip w="w-[15px]" />
      <Faint w="w-[76px]" t="Quick Launch" />
      {QUICK.map((q, i) => <Cell key={i}>{q}</Cell>)}
      <div className="w-[43px] shrink-0 pl-[24px] text-[17px] leading-[13px] text-[#a8c8f8]">»</div>
      <Grip w="w-[6px]" />
      <Grip w="w-[18px]" />
      <Cell w="w-[26px]">
        <Svg w={17} h={16}>
          <path d="M1 8H13L15 14H2Z" fill="#dfe5ea" stroke="#5c6c7c" /><path d="M3 10H12M3 12H13" stroke="#7c8c9c" strokeDasharray="1 1" />
          <path d="M6 8L15 1" stroke="#c4dcf4" strokeWidth="2" /><path d="M10 6L15 2" stroke="#1c4c8c" />
        </Svg>
      </Cell>
      <Grip w="w-[17px]" />
      <Faint w="w-[31px]" t="桌面" />
      <div className="w-[12px] shrink-0 text-[17px] leading-[13px] text-[#a8c8f8]">»</div>
      <Grip w="w-[12px]" />
      <Faint w="w-[27px]" t="地址" />
      <Grip w="w-[15px]" />
      <Cell>
        <Svg w={12} h={17}>
          <rect x="2.500" y=".5" width="7" height="5" fill="#e4e4dc" stroke="#555" /><rect x=".5" y="5" width="11" height="11.500" rx="1.500" fill="#2e9c30" stroke="#d4ecd0" strokeWidth=".7" />
          <path d="M6 7V15M3.500 9V11L6 13L8.500 11V9" stroke="#fff" strokeWidth="1.100" fill="none" />
        </Svg>
      </Cell>
      <div className="-mt-px ml-auto flex w-[238px] shrink-0 border-l border-t border-[#1a3f9c] bg-[linear-gradient(#24b4f8,#1294ea_5px,#1192ea_16px,#17a2f2_25px,#0e78cc)] pl-[7px] shadow-[inset_1px_1px_0_#38c4fa]">
        {TRAY.map((q, i) => <Cell key={i} w="w-[18px]">{q}</Cell>)}
        <div className="pl-[10px] pt-[5px] text-[12px] leading-[18px] text-white"><T t="2:23" /></div>
      </div>
    </div>
  );
}

export default function App() {
  return (
    <div className="relative flex h-[800px] w-[1280px] flex-col overflow-hidden bg-[#d3e2fb] font-['Noto_Sans_CJK_SC',sans-serif] text-black">
      <TitleBar />
      <Toolbar />
      <div className="flex min-h-0 flex-1 gap-[3px]">
        <Sidebar />
        <Main />
      </div>
      <StatusBar />
      <Taskbar />
      <div className="absolute left-[1261px] top-[528px] flex h-[48px] w-[48px] items-center rounded-full border-2 border-[#d4d8d6] bg-[linear-gradient(#7ce08c,#3fbe5c_50%,#5cd272)] pl-[4px] text-[12px] font-bold text-white shadow-[0_2px_6px_#0006,inset_0_0_0_1px_#1f7a54]">
        <span className="font-['Liberation_Sans',sans-serif] [text-shadow:0_1px_1px_#1a6a34]">28</span>
      </div>
    </div>
  );
}
